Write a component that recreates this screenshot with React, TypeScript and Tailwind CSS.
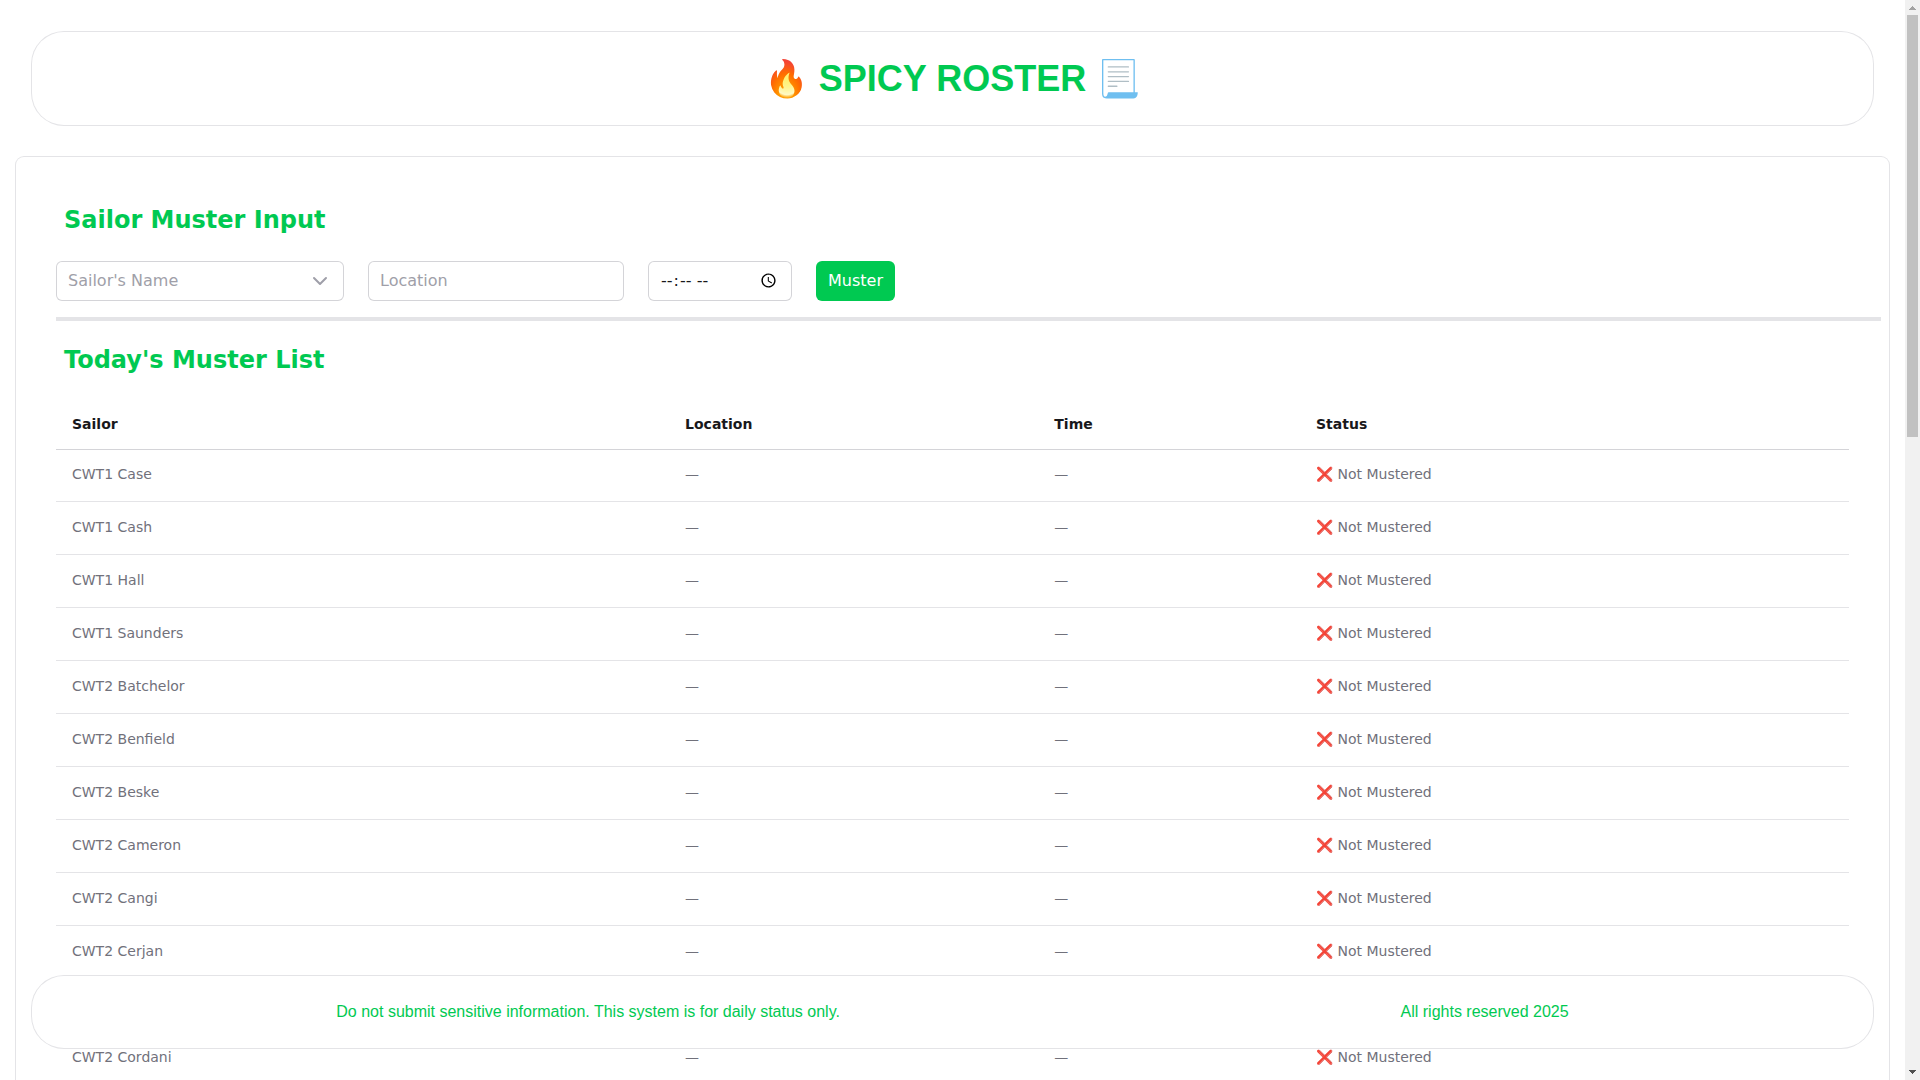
import { useState } from 'react'
import type { FormEvent } from 'react'
import { ChevronDown } from 'lucide-react'

const SAILORS = [
  'CWT1 Case',
  'CWT1 Cash',
  'CWT1 Hall',
  'CWT1 Saunders',
  'CWT2 Batchelor',
  'CWT2 Benfield',
  'CWT2 Beske',
  'CWT2 Cameron',
  'CWT2 Cangi',
  'CWT2 Cerjan',
  'CWT2 Clark',
  'CWT2 Cordani',
]

type Muster = { location: string; time: string }

const FIELD =
  'h-10 rounded-md bg-white px-3 pb-px text-base text-zinc-900 ring ring-inset ring-zinc-300 outline-none focus:ring-2 focus:ring-green-500'

const TH = 'px-4 pt-[13px] pb-[15px] font-semibold'
const TD = 'px-4 pt-[15px] pb-[17px] whitespace-nowrap'

function MusterForm({ onMuster }: { onMuster: (name: string, entry: Muster) => void }) {
  const [name, setName] = useState('')
  const [location, setLocation] = useState('')
  const [time, setTime] = useState('')

  const submit = (e: FormEvent) => {
    e.preventDefault()
    if (!name) return
    onMuster(name, { location, time })
    setName('')
    setLocation('')
    setTime('')
  }

  return (
    <form onSubmit={submit} className="flex flex-wrap gap-6">
      <div className="relative">
        <select
          aria-label="Sailor's Name"
          value={name}
          onChange={(e) => setName(e.target.value)}
          className={`${FIELD} w-72 appearance-none ${name ? '' : 'text-zinc-400!'}`}
        >
          <option value="">Sailor's Name</option>
          {SAILORS.map((s) => (
            <option key={s}>{s}</option>
          ))}
        </select>
        <ChevronDown
          size={24}
          className="pointer-events-none absolute right-3 top-2 text-zinc-400"
        />
      </div>
      <input
        type="text"
        aria-label="Location"
        placeholder="Location"
        value={location}
        onChange={(e) => setLocation(e.target.value)}
        className={`${FIELD} w-64 placeholder:text-zinc-400`}
      />
      <input
        type="time"
        aria-label="Time"
        value={time}
        onChange={(e) => setTime(e.target.value)}
        className={`${FIELD} w-36`}
      />
      <button
        type="submit"
        className="h-10 rounded-md bg-green-500 px-3 text-base text-white hover:bg-green-600"
      >
        Muster
      </button>
    </form>
  )
}

function MusterTable({ mustered }: { mustered: Record<string, Muster> }) {
  return (
    <table className="w-full text-left text-sm">
      <thead className="relative after:absolute after:inset-x-0 after:top-full after:h-px after:bg-zinc-300">
        <tr className="text-zinc-900">
          <th className={`${TH} min-w-[165px]`}>Sailor</th>
          <th className={TH}>Location</th>
          <th className={TH}>Time</th>
          <th className={TH}>Status</th>
        </tr>
      </thead>
      <tbody className="text-zinc-500">
        {SAILORS.map((s) => {
          const entry = mustered[s]
          return (
            <tr key={s} className="border-b border-zinc-200">
              <td className={TD}>{s}</td>
              <td className={TD}>{entry?.location || '—'}</td>
              <td className={TD}>{entry?.time || '—'}</td>
              <td className={TD}>{entry ? '✅ Mustered' : '❌ Not Mustered'}</td>
            </tr>
          )
        })}
      </tbody>
    </table>
  )
}

function ScrollRail() {
  return (
    <div aria-hidden="true" className="flex w-[15px] shrink-0 flex-col items-center bg-[#f1f1f1]">
      <svg width="15" height="15" viewBox="0 0 15 15" shapeRendering="crispEdges" className="shrink-0">
        <path d="M4 10V9h1V8h1V7h1V6h1v1h1v1h1v1h1v1z" fill="#a3a3a3" />
      </svg>
      <div className="flex w-[11px] flex-1 flex-col">
        <div className="h-[422px] bg-[#c1c1c1]" />
      </div>
      <svg width="15" height="15" viewBox="0 0 15 15" shapeRendering="crispEdges" className="shrink-0">
        <path d="M4 5v1h1v1h1v1h1v1h1V8h1V7h1V6h1V5z" fill="#505050" />
      </svg>
    </div>
  )
}

export default function App() {
  const [mustered, setMustered] = useState<Record<string, Muster>>({})

  return (
    <div className="flex h-screen bg-white font-['DejaVu_Sans',sans-serif]">
      <div className="relative min-w-0 flex-1">
        <div className="h-full overflow-y-auto [scrollbar-width:none]">
          <header className="m-8 flex justify-center rounded-4xl p-6 ring ring-zinc-200">
            <h1 className="font-['Liberation_Sans',sans-serif] text-4xl/[45px] font-bold text-green-500">
              🔥 SPICY ROSTER 📃
            </h1>
          </header>

          <main className="mx-4 rounded-lg p-10 pb-[1600px] ring ring-zinc-200">
            <h2 className="px-2 pt-[7px] pb-[25px] text-2xl font-bold text-green-500">
              Sailor Muster Input
            </h2>
            <MusterForm
              onMuster={(name, entry) => setMustered((m) => ({ ...m, [name]: entry }))}
            />
            <hr className="-mr-8 mt-4 border-t-4 border-zinc-200" />
            <h2 className="px-2 pt-[23px] pb-[25px] text-2xl font-bold text-green-500">
              Today's Muster List
            </h2>
            <MusterTable mustered={mustered} />
          </main>
        </div>

        <footer className="absolute inset-x-8 bottom-8 flex justify-around rounded-4xl bg-white p-6 font-['Liberation_Sans',sans-serif] text-base text-green-500 ring ring-zinc-200">
          <p>Do not submit sensitive information. This system is for daily status only.</p>
          <p>All rights reserved 2025</p>
        </footer>
      </div>
      <ScrollRail />
    </div>
  )
}
